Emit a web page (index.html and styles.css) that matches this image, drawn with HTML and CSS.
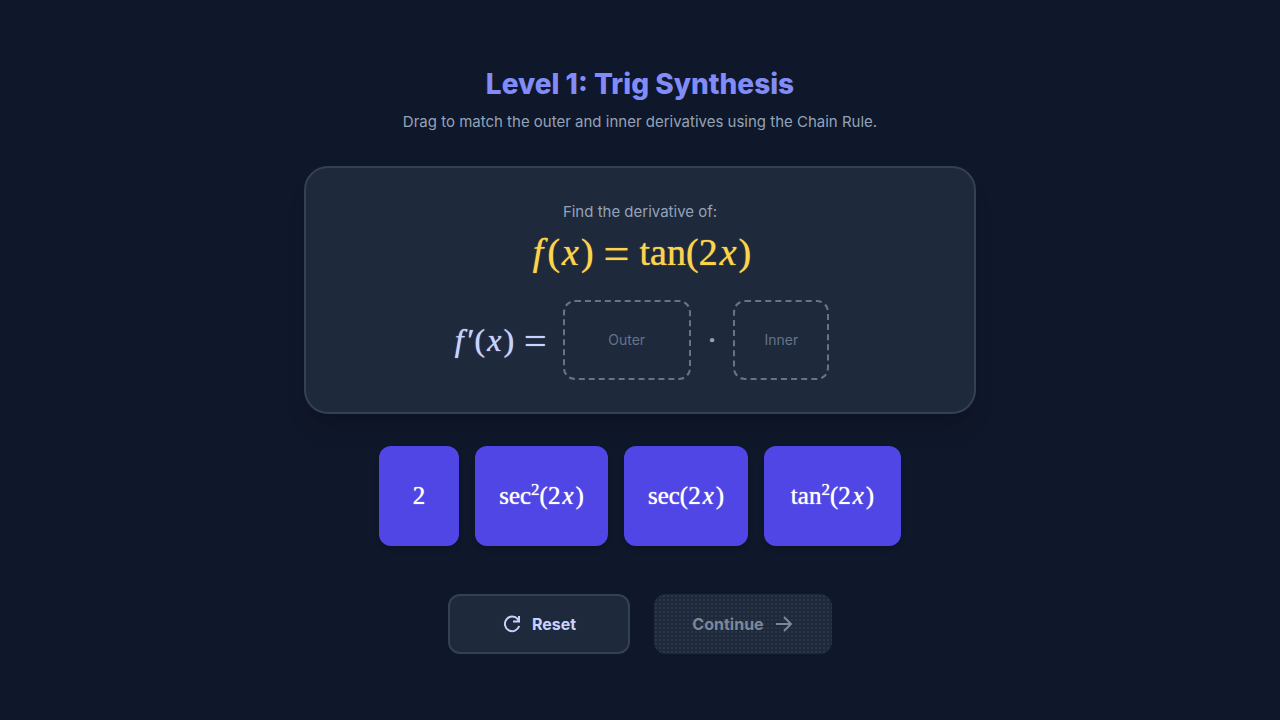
FILE: index.html
```html
<!DOCTYPE html>
<html lang="en">
<head>
<meta charset="utf-8">
<meta name="viewport" content="width=device-width, initial-scale=1">
<title>Level 1: Trig Synthesis</title>
<link rel="stylesheet" href="styles.css">
</head>
<body>
<main class="game">
  <header class="intro">
    <h1 class="title">Level 1: Trig Synthesis</h1>
    <p class="subtitle">Drag to match the outer and inner derivatives using the Chain Rule.</p>
  </header>

  <section class="card">
    <p class="prompt">Find the derivative of:</p>
    <div class="math problem"><i class="fn">f</i>(<i>x</i>)<span class="eq">=</span>tan(2<i>x</i>)</div>
    <div class="answer">
      <div class="math lhs"><i class="fn">f</i><span class="prime">′</span>(<i>x</i>)<span class="eq">=</span></div>
      <div class="slot slot-outer">Outer</div>
      <div class="math dot">·</div>
      <div class="slot slot-inner">Inner</div>
    </div>
  </section>

  <div class="tiles">
    <button class="tile math" type="button">2</button>
    <button class="tile math tile-sec2" type="button"><span>sec<sup>2</sup>(2<i>x</i>)</span></button>
    <button class="tile math tile-sec" type="button"><span>sec(2<i>x</i>)</span></button>
    <button class="tile math tile-tan2" type="button"><span>tan<sup>2</sup>(2<i>x</i>)</span></button>
  </div>

  <div class="actions">
    <button class="action reset" type="button">
      <svg class="icon" viewBox="0 0 20 20" aria-hidden="true"><path d="M17.2 12A7.3 7.3 0 1 1 15.8 5.2L17 7M17 2v5.5h-6" /></svg>
      Reset
    </button>
    <button class="action continue" type="button" disabled>
      Continue
      <svg class="icon" viewBox="0 0 20 20" aria-hidden="true"><path d="M2 10h15M10 3l7 7-7 7" /></svg>
    </button>
  </div>
</main>
</body>
</html>
```
FILE: styles.css
```css
* {
  box-sizing: border-box;
}

body {
  margin: 0;
  min-height: 100vh;
  display: flex;
  align-items: center;
  justify-content: center;
  padding: 16px;
  background: #0f172a;
  color: #fff;
  font-family: Inter, "Liberation Sans", sans-serif;
  font-size: 16px;
  line-height: 24px;
}

h1,
p {
  margin: 0;
}

button {
  margin: 0;
  border: 0;
  font: inherit;
  color: inherit;
}

.game {
  width: 100%;
  max-width: 672px;
  display: flex;
  flex-direction: column;
  gap: 32px;
}

.intro {
  display: flex;
  flex-direction: column;
  gap: 8px;
  text-align: center;
}

.title {
  color: #818cf8;
  font-size: 28px;
  line-height: 36px;
  font-weight: 800;
}

.subtitle,
.prompt {
  color: #94a3b8;
  font-size: 15px;
}

.card {
  display: flex;
  flex-direction: column;
  align-items: center;
  padding: 32px;
  border: 2px solid #334155;
  border-radius: 24px;
  background: #1e293b;
  box-shadow: 0 20px 25px -5px rgb(0 0 0 / 0.1), 0 8px 10px -6px rgb(0 0 0 / 0.1);
}

.math {
  font-family: "Liberation Serif", serif;
  text-shadow: 0 0 1px currentColor;
  white-space: nowrap;
}

.math i {
  padding: 0 2px;
}

.math .fn {
  padding: 0 4px;
}

.math sup {
  font-size: 17px;
  line-height: 0;
}

.problem {
  margin: 8px 0 28px;
  color: #fcd34d;
  font-size: 38px;
  line-height: 40px;
}

.eq {
  margin: 0 10px;
  font-size: 46px;
  line-height: 0;
  vertical-align: -4px;
}

.answer {
  display: flex;
  align-items: center;
  gap: 16px;
}

.lhs {
  color: #c7d2fe;
  font-size: 32px;
  line-height: 36px;
}

.lhs .eq {
  margin-right: 0;
  font-size: 40px;
}

.slot {
  display: flex;
  align-items: center;
  justify-content: center;
  height: 80px;
  border: 2px dashed #64748b;
  border-radius: 12px;
  color: #64748b;
  font-size: 14px;
  line-height: 20px;
}

.slot-outer {
  width: 128px;
}

.slot-inner {
  width: 96px;
}

.dot {
  color: #94a3b8;
  font-size: 32px;
  line-height: 36px;
}

.tiles {
  display: flex;
  flex-wrap: wrap;
  justify-content: center;
  gap: 16px;
}

.tile {
  min-width: 80px;
  height: 100px;
  padding: 0 16px;
  border-radius: 12px;
  background: #4f46e5;
  box-shadow: 0 4px 6px -1px rgb(0 0 0 / 0.1), 0 2px 4px -2px rgb(0 0 0 / 0.1);
  font-family: "Liberation Serif", serif;
  font-size: 25px;
  line-height: 32px;
}

.tile-sec2 {
  min-width: 133px;
}

.tile-sec {
  min-width: 124px;
}

.tile-tan2 {
  min-width: 137px;
}

.actions {
  display: flex;
  justify-content: center;
  gap: 24px;
  padding-top: 16px;
}

.action {
  display: flex;
  align-items: center;
  justify-content: center;
  gap: 10px;
  height: 60px;
  border-radius: 12px;
  font-weight: 700;
}

.reset {
  width: 182px;
  border: 2px solid #334155;
  background: #1e293b;
  color: #c7d2fe;
}

.continue {
  width: 178px;
  background: radial-gradient(circle, #2b3749 0 1px, transparent 1px) 0 0 / 4px 4px #1e293b;
  color: #7c879a;
}

.icon {
  width: 20px;
  height: 20px;
  fill: none;
  stroke: currentColor;
  stroke-width: 2;
}
```
